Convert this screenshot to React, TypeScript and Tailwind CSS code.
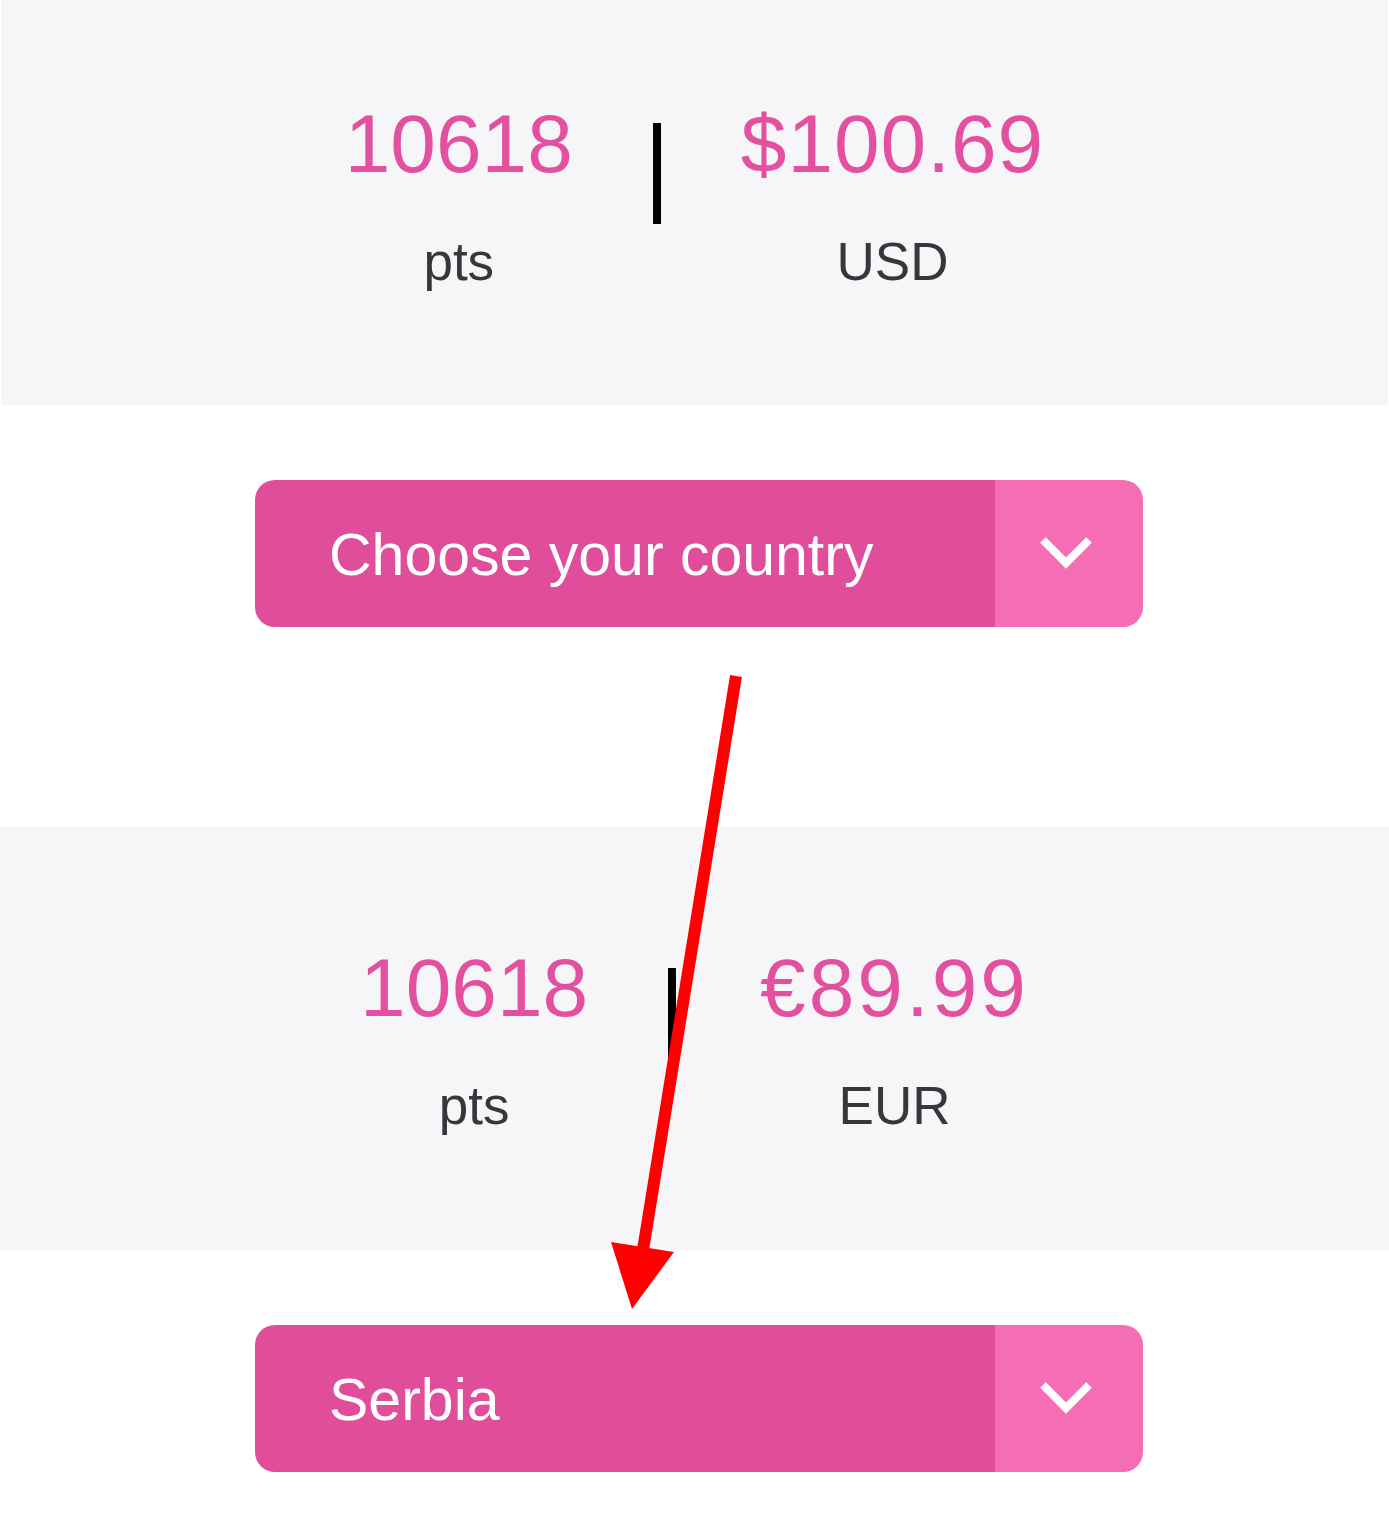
import React from "react";

function Stat({ value, unit, valueClass }: { value: string; unit: string; valueClass?: string }) {
  return (
    <div className="flex flex-col items-center">
      <div className={"text-[82px] leading-[82px] text-[#e3509f] " + (valueClass ?? "")}>{value}</div>
      <div className="mt-[50px] text-[53px] leading-[53px] text-[#36363b]">{unit}</div>
    </div>
  );
}

function Select({ label, className }: { label: string; className: string }) {
  return (
    <div className={"ml-[255px] flex h-[147px] w-[888px] overflow-hidden rounded-[20px] " + className}>
      <div className="flex flex-1 items-center bg-[#e04d9b] pl-[74px] pt-[4px] text-[59px] text-white">{label}</div>
      <div className="flex w-[148px] items-center justify-center bg-[#f56db5] pr-[6px]">
        <svg width="52" height="34" viewBox="0 0 52 34" fill="none">
          <polyline points="3,3 26,26 49,3" stroke="#ffffff" strokeWidth="8" strokeLinecap="butt" strokeLinejoin="miter" />
        </svg>
      </div>
    </div>
  );
}

export default function App() {
  return (
    <div
      className="relative h-[1520px] w-[1389px] bg-white"
      style={{ fontFamily: '"Liberation Sans", Arial, Helvetica, sans-serif' }}
    >
      <div className="mx-[1px] h-[405px] bg-[#f6f6f8] pt-[103px]">
        <div className="flex justify-center items-start">
          <Stat value="10618" unit="pts" />
          <div className="ml-[80px] mr-[80px] mt-[20px] h-[101px] w-[8px] bg-black" />
          <Stat value="$100.69" unit="USD" valueClass="tracking-[1px]" />
        </div>
      </div>

      <Select label="Choose your country" className="mt-[75px]" />

      <div className="mt-[199px] h-[424px] bg-[#f6f6f8] pt-[121px]">
        <div className="flex justify-center items-start">
          <Stat value="10618" unit="pts" />
          <div className="ml-[80px] mr-[84px] mt-[21px] h-[101px] w-[8px] bg-black" />
          <Stat value="€89.99" unit="EUR" valueClass="tracking-[3px]" />
        </div>
      </div>

      <Select label="Serbia" className="mt-[75px]" />

      <svg
        className="pointer-events-none absolute left-0 top-0"
        width="1389"
        height="1520"
        viewBox="0 0 1389 1520"
      >
        <line x1="736" y1="676" x2="643" y2="1250" stroke="#ff0000" strokeWidth="12" />
        <polygon points="611,1242 674,1252 632,1309" fill="#ff0000" />
      </svg>
    </div>
  );
}
